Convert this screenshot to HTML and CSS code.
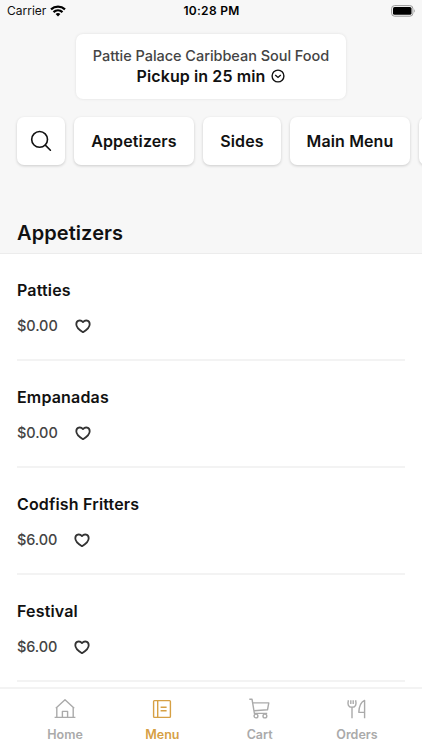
FILE: index.html
```html
<!DOCTYPE html>
<html lang="en">
<head>
<meta charset="utf-8">
<title>Menu</title>
<link rel="stylesheet" href="styles.css">
</head>
<body>
<svg class="symbols" width="0" height="0">
  <symbol id="heart" viewBox="0 0 16 15"><path d="M8 13.2C6 12 1.3 9.2 1.3 5.2C1.3 1.3 5.6 .4 8 3.1C10.4 .4 14.7 1.3 14.7 5.2C14.7 9.2 10 12 8 13.2Z" fill="none" stroke="currentColor" stroke-width="1.8" stroke-linejoin="round"/></symbol>
</svg>
<div class="app">
  <header class="top">
    <div class="status">
      <div class="carrier"><span>Carrier</span>
        <svg width="16" height="12" viewBox="0 0 16 12"><g fill="none" stroke="#000" stroke-width="2.3"><path d="M1 4.3C5 .6 11 .6 15 4.3"/><path d="M3.5 7.1C6.1 4.8 9.9 4.8 12.5 7.1"/></g><path d="M5.6 9.1Q8 7 10.4 9.1L8 11.5Z"/></svg>
      </div>
      <time>10:28 PM</time>
      <svg class="battery" width="25" height="12" viewBox="0 0 25 12"><rect x=".6" y=".6" width="21.3" height="10.6" rx="3" fill="none" stroke="#999"/><rect x="2" y="2" width="18.5" height="7.8" rx="1.6"/><path d="M23.2 4Q25 5.9 23.2 7.8Z" fill="#999"/></svg>
    </div>
    <div class="pickup">
      <div class="place">Pattie Palace Caribbean Soul Food</div>
      <div class="when"><span>Pickup in 25 min</span>
        <svg width="14" height="14" viewBox="0 0 14 14" fill="none" stroke="#111" stroke-width="1.4"><circle cx="7" cy="7" r="5.9"/><path d="M4.2 5.9L7 8.4L9.8 5.9"/></svg>
      </div>
    </div>
    <nav class="chips">
      <div class="chip search"><svg width="22" height="22" viewBox="0 0 22 22" fill="none" stroke="#111" stroke-width="1.6" stroke-linecap="round"><circle cx="9.6" cy="9.4" r="7.9"/><path d="M15.3 15.1L20.4 20.2"/></svg></div>
      <div class="chip appetizers"><span>Appetizers</span></div>
      <div class="chip sides"><span>Sides</span></div>
      <div class="chip main"><span>Main Menu</span></div>
      <div class="chip more"></div>
    </nav>
    <h1>Appetizers</h1>
  </header>
  <main class="list">
    <article class="item"><h2>Patties</h2><div class="meta"><span>$0.00</span><svg class="heart"><use href="#heart"/></svg></div></article>
    <article class="item"><h2>Empanadas</h2><div class="meta"><span>$0.00</span><svg class="heart"><use href="#heart"/></svg></div></article>
    <article class="item"><h2>Codfish Fritters</h2><div class="meta"><span>$6.00</span><svg class="heart"><use href="#heart"/></svg></div></article>
    <article class="item"><h2>Festival</h2><div class="meta"><span>$6.00</span><svg class="heart"><use href="#heart"/></svg></div></article>
  </main>
  <footer class="tabs">
    <div class="tab"><svg viewBox="0 0 22 22"><path d="M.6 19.4H21.4M2.8 19.4V9.4M19.2 19.4V9.4M1.8 10.2L11 1.8L20.2 10.2M8.4 19.4V13.4H13.6V19.4"/></svg><span>Home</span></div>
    <div class="tab active"><svg viewBox="0 0 22 22"><rect x="2.6" y="2.6" width="16.8" height="16.8" rx=".8"/><path d="M6.7 2.6V19.4M9.6 9.3H15.6M9.6 12.7H15.6"/></svg><span>Menu</span></div>
    <div class="tab"><svg viewBox="0 0 22 22"><path d="M.3 1.2H3L5.4 15.4H18.2M3.6 4.9H19.8L18.5 11.8L5 12.8"/><circle cx="7" cy="18" r="1.9"/><circle cx="15.9" cy="18" r="1.9"/></svg><span>Cart</span></div>
    <div class="tab"><svg viewBox="0 0 22 22"><path d="M2.4 2.2C1.4 6 2 9.3 6 9.3S10.6 6 9.6 2.2M4.8 2.3V6M7.2 2.3V6M6 9.3V20.2M18.6 20.2V2.4C14.6 4.2 13 9.5 12.8 14.4H18.6"/></svg><span>Orders</span></div>
  </footer>
</div>
</body>
</html>
```
FILE: styles.css
```css
* { box-sizing: border-box; }
body { margin: 0; background: #fff; color: #111; font-family: Inter, "Liberation Sans", sans-serif; }
svg { display: block; flex: none; }
.symbols { display: none; }
.app { height: 750px; width: 422px; display: flex; flex-direction: column; overflow: hidden; }
.top { flex: none; height: 254px; background: #f7f7f7; border-bottom: 1px solid #ececec; }
.status { height: 22px; display: grid; grid-template-columns: 1fr auto 1fr; align-items: center; padding: 0 6px 0 7px; font-size: 12px; line-height: 22px; }
.carrier { display: flex; gap: 4px; align-items: center; }
.status time { font-weight: 600; letter-spacing: .3px; color: #000; }
.battery { justify-self: end; }
.pickup { width: 270px; height: 65px; margin: 12px auto 0; padding-top: 12px; background: #fff; border-radius: 7px; box-shadow: 0 0 3px rgba(0,0,0,.1); text-align: center; }
.place { font-size: 14.5px; font-weight: 500; line-height: 20px; letter-spacing: -.04px; color: #444; white-space: nowrap; }
.when { display: flex; justify-content: center; align-items: center; gap: 6px; font-size: 16px; letter-spacing: .1px; font-weight: 600; line-height: 20px; }
.chips { display: flex; gap: 9px; margin-top: 18px; padding-left: 17px; }
.chip { flex: none; height: 48px; display: flex; align-items: center; justify-content: center; background: #fff; border-radius: 7px; box-shadow: 0 1px 3px rgba(0,0,0,.18); font-size: 16px; font-weight: 600; letter-spacing: .12px; white-space: nowrap; }
.search { width: 48px; }
.appetizers { width: 120px; }
.sides { width: 78px; }
.main { width: 120px; }
.more { width: 80px; }
h1 { margin: 53px 0 0 17px; font-size: 20px; line-height: 30px; font-weight: 600; letter-spacing: .08px; }
.list { flex: none; height: 433px; padding: 0 17px; overflow: hidden; }
.item { height: 107px; border-bottom: 2px solid #f3f3f3; padding-top: 25px; }
.item h2 { margin: 0; font-size: 16px; line-height: 22px; font-weight: 600; letter-spacing: .17px; }
.meta { display: flex; align-items: center; gap: 17px; margin-top: 15px; font-size: 14.5px; line-height: 20px; font-weight: 500; letter-spacing: -.08px; color: #444; }
.heart { width: 16px; height: 15px; color: #333; }
.tabs { flex: 1; display: grid; grid-template-columns: repeat(4, 97.3px); justify-content: center; padding-top: 9px; border-top: 2px solid #f3f3f3; background: #fff; }
.tab { display: flex; flex-direction: column; align-items: center; gap: 6px; color: #aaa; font-size: 12.5px; line-height: 18px; font-weight: 600; }
.tab svg { width: 22px; height: 22px; fill: none; stroke: currentColor; stroke-width: 1.4; stroke-linejoin: round; }
.active { color: #d6a044; }
```
